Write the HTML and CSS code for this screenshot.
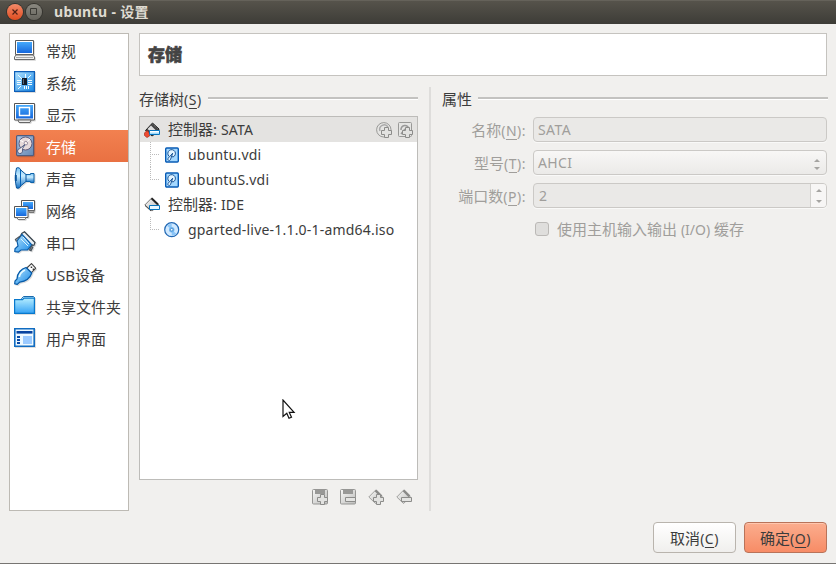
FILE: index.html
```
<!DOCTYPE html>
<html lang="zh-CN">
<head>
<meta charset="utf-8">
<title>ubuntu - 设置</title>
<link rel="stylesheet" href="styles.css">
</head>
<body>
<svg class="defs" width="0" height="0" aria-hidden="true">
  <defs>
    <linearGradient id="blue" x1="0" y1="0" x2="0" y2="1"><stop offset="0" stop-color="#45a9fb"/><stop offset="1" stop-color="#1667dc"/></linearGradient>
    <linearGradient id="sky" x1="0" y1="0" x2="1" y2="1"><stop offset="0" stop-color="#b5e4ff"/><stop offset="1" stop-color="#1688e6"/></linearGradient>
    <linearGradient id="horn" x1="0" y1="0" x2="0" y2="1"><stop offset="0" stop-color="#7cc4f4"/><stop offset=".4" stop-color="#c9ecff"/><stop offset="1" stop-color="#1270c4"/></linearGradient>
    <linearGradient id="folder" x1="0" y1="0" x2="0" y2="1"><stop offset="0" stop-color="#b5edff"/><stop offset="1" stop-color="#36a3f5"/></linearGradient>
    <linearGradient id="steel" x1="0" y1="0" x2="1" y2="1"><stop offset="0" stop-color="#a9c4e4"/><stop offset="1" stop-color="#6688b4"/></linearGradient>
    <linearGradient id="grey" x1="0" y1="0" x2="1" y2="1"><stop offset="0" stop-color="#f7f7f6"/><stop offset="1" stop-color="#bdbdbb"/></linearGradient>
    <symbol id="disk" viewBox="0 0 16 16">
      <rect x="1.7" y="1" width="12.6" height="14" rx="1" fill="#a4d8ff" stroke="#075bb5" stroke-width="1.4"/>
      <path d="M5 9.2A3.8 3.8 0 1 1 9 10L7.8 9.4M8.7 6.2 4.6 10.8a1.4 1.4 0 1 0 2 1.5z" fill="#e3f4ff" stroke="#1c5596" stroke-width="1"/>
    </symbol>
    <symbol id="plus" viewBox="0 0 11 11">
      <path d="M3.5.5h4v3h3v4h-3v3h-4v-3h-3v-4h3z" fill="#e2e2e0" stroke="#8c8c8a"/>
    </symbol>
  </defs>
</svg>
<div class="window">
  <header class="titlebar">
    <span class="win-btn close"><svg width="16" height="16" viewBox="0 0 16 16"><path d="m5.5 5.5 5 5m0-5-5 5" stroke="#512015" stroke-width="1.2"/></svg></span>
    <span class="win-btn max"><svg width="16" height="16" viewBox="0 0 16 16"><path d="M4.5 4.5h6v6h-6z" fill="none" stroke="#3b3a35" stroke-width="1"/></svg></span>
    <h1>ubuntu - 设置</h1>
  </header>
  <div class="content">
    <nav class="sidebar">
      <div class="item"><svg viewBox="0 0 22 22"><path d="M1.5 1.5h18v14h-18z" fill="#fff" stroke="#5a5a5a"/><path d="M3 3h15v11H3z" fill="url(#blue)"/><path d="M2 16h17l1.5 2v2.5H.5V18z" fill="#f0f0ef" stroke="#6c6c6c"/><path d="M2 18.5h17" stroke="#aaa"/></svg><span>常规</span></div>
      <div class="item"><svg viewBox="0 0 22 22"><path d="M.6.6h19.8v19.8H.6z" fill="url(#sky)" stroke="#0d5eb8" stroke-width="1.2"/><path d="M11.5 3v4M4 4l4 4m9-4-3 3M3 9.5h4m-4 2h4m-4 2h4m7-4h4m-4 2h4m-4 2h4M4 18l3-3m3.5 0v3m2-3v3m2-3v3" stroke="#f2fbff"/><path d="M8 7h5v7H8z" fill="#111b29"/><path d="M9 8h1v5H9z" fill="#596776"/></svg><span>系统</span></div>
      <div class="item"><svg viewBox="0 0 22 22"><path d="M.5.5h20v16.5h-20z" fill="#fff" stroke="#555"/><path d="M2 2h17v13.5H2z" fill="url(#blue)"/><path d="M5.5 4.5h10v8h-10z" fill="none" stroke="#fff" stroke-width="1.4"/><path d="m4 17 1 2.5h11l1-2.5z" fill="#eee" stroke="#666"/></svg><span>显示</span></div>
      <div class="item selected"><svg viewBox="0 0 22 22"><rect x="2.6" y=".6" width="17" height="20" rx="1" fill="url(#steel)" stroke="#505d80" stroke-width="1.2"/><circle cx="11.5" cy="8.5" r="6.5" fill="#e6d9da" stroke="#625c7a"/><path d="M11.5 8.5 16 3.7M11.5 8.5 6 5" stroke="#fff"/><circle cx="11.8" cy="8.2" r="1.8" fill="#faf1ec" stroke="#998c9f"/><path d="M11 9.5 5.6 13.6a2.5 2.5 0 1 0 2.8 3.3l.2-3.4z" fill="#eee5e7" stroke="#505d83"/></svg><span>存储</span></div>
      <div class="item"><svg viewBox="0 0 22 22"><path d="M11.5 7.5h5v-1H20v9h-3.5v-1h-5z" fill="url(#horn)" stroke="#0c62a9"/><path d="M2.5 1C4.5.2 6 1 6.8 3L12 7.5v7L6.8 18.8C6 21 4.5 21.6 2.5 21 1 15 1 7 2.5 1z" fill="url(#horn)" stroke="#07539b"/><path d="M6.5 3v16" fill="none" stroke="#0865b9"/><path d="M1.8 8v6" stroke="#07539b" stroke-width="2"/></svg><span>声音</span></div>
      <div class="item"><svg viewBox="0 0 22 22"><path d="M7.5 1.5h13v10h-13z" fill="#fff" stroke="#555"/><path d="M9 3h10v7H9z" fill="url(#blue)"/><path d="M15 12h5v1.5h-5z" fill="#ddd" stroke="#777"/><path d="M.5 7.5H14v11H.5z" fill="#fff" stroke="#555"/><path d="M2 9h10.5v8H2z" fill="url(#blue)"/><path d="M3 18.5h9l-1 2H4z" fill="#fff" stroke="#777"/></svg><span>网络</span></div>
      <div class="item"><svg viewBox="0 0 22 22"><path d="M8 2.2 10.5.8 21 11.5l-1 2.7-3 .1L7 4z" fill="#e9eff3" stroke="#36424b" stroke-width="1.2"/><path d="M8 3.5 18 14l-4.5 5H7L4.3 21.2.8 20.5 1 17.8 4 15l-1-5z" fill="url(#sky)" stroke="#075ba9" stroke-width="1.2"/><path d="m7 4.5-5.5 4 1 2m16 3-3 5.5 1.5.6 2-4" fill="none" stroke="#4b565f" stroke-width="1.3"/><path d="m7 8 7 7m-5-9 6 7" stroke="#ddf5ff"/></svg><span>串口</span></div>
      <div class="item"><svg viewBox="0 0 22 22"><path d="m12.8 5 4.7-4.4 4.2 4.6-4.5 4.6z" fill="#fff" stroke="#444" stroke-width="1.1"/><path d="M16.7 3.5h1.5v1.4h-1.5zm2 2h1.4v1.4h-1.4z" fill="#333"/><path d="M12 4.5 17.8 10c-1.6 4.8-6 8.3-12 9.1L3.2 21.4.7 20.8 1 18l2-2C3 10 7.5 5.8 12 4.5z" fill="url(#sky)" stroke="#075ba9" stroke-width="1.2"/><path d="M11 7c-3 1.5-5.3 4-5.7 7" fill="none" stroke="#e8faff" stroke-width="1.6"/></svg><span>USB设备</span></div>
      <div class="item"><svg viewBox="0 0 22 22"><path d="M7.5 5V3.7l2-2.2h10l1 1.2V6" fill="#c7eeff" stroke="#1a69ab"/><path d="M.6 4.6h8L10 3.2h10.4v15.2H.6z" fill="url(#folder)" stroke="#0878cc" stroke-width="1.2"/></svg><span>共享文件夹</span></div>
      <div class="item"><svg viewBox="0 0 22 22"><path d="M.8 1.8h19.4v17.5H.8z" fill="#eef9ff" stroke="#116cc1" stroke-width="1.6"/><path d="M2.5 4h16v2.6h-16z" fill="#0743a0"/><path d="M3 9h3v2H3zm0 3h3v2H3zm0 3h3v2H3z" fill="#0b4ba6"/><path d="M9 9h9v8H9z" fill="#9bcaff"/></svg><span>用户界面</span></div>
    </nav>
    <main class="main">
      <h2 class="page-title">存储</h2>
      <div class="panes">
        <section class="tree-pane">
          <h3 class="group-title"><span>存储树<i>(<u>S</u>)</i></span></h3>
          <div class="tree">
            <div class="row controller current">
              <svg class="ico" viewBox="0 0 16 16"><path d="M1.5 8.5 8.5 1 15 7l-1 3-6 4z" fill="#444" stroke="#222"/><path d="M3.5 7 7 3.5l5 5-4 2.5z" fill="#ddd"/><path d="m8.5 2 5 4.5" stroke="#888" stroke-dasharray="1 1"/><path d="M.5 11 3 8.5 5.5 11v3L3 15.5l-2.5-2z" fill="#ee4c32" stroke="#a82d1e" stroke-width=".7"/><path d="M5.5 8.5h10v4h-10z" fill="#fff" stroke="#0874bd"/><path d="M6 10.5h9V12H6z" fill="#9edcff"/></svg>
              <span class="label">控制器: <i>SATA</i></span>
              <svg class="ico add" viewBox="0 0 16 16"><circle cx="7.8" cy="7.8" r="7.2" fill="#e5e5e3" stroke="#999997"/><path d="M4 9a4.5 4.5 0 0 1 8-4" fill="none" stroke="#aaa" stroke-width="1.5"/><use href="#plus" x="5" y="5" width="11" height="11"/></svg>
              <svg class="ico add" viewBox="0 0 16 16"><rect x="1.5" y=".5" width="13" height="14" rx="1" fill="#e5e5e3" stroke="#999997"/><path d="M4 8a4 4 0 1 1 8-1M4 12l4-5" fill="none" stroke="#999" stroke-width="1.5"/><use href="#plus" x="5" y="5" width="11" height="11"/></svg>
            </div>
            <div class="row leaf"><span class="branch"></span><svg class="ico"><use href="#disk"/></svg><span class="label"><i>ubuntu.vdi</i></span></div>
            <div class="row leaf last"><span class="branch"></span><svg class="ico"><use href="#disk"/></svg><span class="label"><i>ubuntuS.vdi</i></span></div>
            <div class="row controller">
              <svg class="ico" viewBox="0 0 16 16"><path d="M.8 8 7.5 1.2 15 8l-7 6z" fill="url(#grey)" stroke="#777"/><path d="m7.5 1.2 6.5 6.3" stroke="#222" stroke-width="2"/><path d="M1 8.5 7 14" stroke="#444"/><path d="M5.5 8.5h10v4h-10z" fill="#e9f8ff" stroke="#0874bd"/></svg>
              <span class="label">控制器: <i>IDE</i></span>
            </div>
            <div class="row leaf last"><span class="branch"></span><svg class="ico" viewBox="0 0 16 16"><circle cx="7.7" cy="7.7" r="7" fill="#d0e9ff" stroke="#2168b4" stroke-width="1.2"/><path d="M7.7 7.7 3 3.7A6 6 0 0 1 7.7 2zM7.7 7.7l4.7 4a6 6 0 0 1-4.7 1.7z" fill="#8cc6f8"/><circle cx="7.7" cy="7.7" r="2.7" fill="#75b6ee"/><circle cx="7.7" cy="7.7" r="1.3" fill="#fff" stroke="#247ac5" stroke-width=".7"/></svg><span class="label"><i>gparted-live-1.1.0-1-amd64.iso</i></span></div>
            <svg class="pointer" width="14" height="21" viewBox="0 0 14 21"><path d="M1 1v16.5l3.8-3.3 2.2 5 2.5-1-2.2-4.8h4.8z" fill="#fff" stroke="#111" stroke-width="1.2"/></svg>
          </div>
          <div class="tools">
            <svg class="ico" viewBox="0 0 16 16"><rect x=".5" y=".5" width="15" height="14.5" rx="1" fill="url(#grey)" stroke="#969694"/><path d="M3 1h10v4H3z" fill="#989896"/><use href="#plus" x="5" y="5" width="11" height="11"/></svg>
            <svg class="ico" viewBox="0 0 16 16"><rect x=".5" y=".5" width="15" height="14.5" rx="1" fill="url(#grey)" stroke="#969694"/><path d="M3 1h10v4H3z" fill="#989896"/><path d="M5.5 8.5h10v4h-10z" fill="#e4e4e2" stroke="#8c8c8a"/></svg>
            <svg class="ico" viewBox="0 0 16 16"><path d="M.8 8 7.5 1.2 14.5 8l-7 6.5z" fill="url(#grey)" stroke="#a1a19f"/><path d="m7.5 1.4 6 6" stroke="#8a8a88" stroke-width="2.4"/><use href="#plus" x="5" y="5" width="11" height="11"/></svg>
            <svg class="ico" viewBox="0 0 16 16"><path d="M.8 8 7.5 1.2 14.5 8l-7 6.5z" fill="url(#grey)" stroke="#a1a19f"/><path d="m7.5 1.4 6 6" stroke="#8a8a88" stroke-width="2.4"/><path d="M5.5 8.5h10v4h-10z" fill="#e4e4e2" stroke="#8c8c8a"/></svg>
          </div>
        </section>
        <div class="splitter"></div>
        <section class="props-pane">
          <h3 class="group-title"><span>属性</span></h3>
          <div class="form">
            <label>名称<i>(<u>N</u>):</i></label><div class="field text"><i>SATA</i></div>
            <label>型号<i>(<u>T</u>):</i></label><div class="field combo"><i>AHCI</i><span class="arrows"></span></div>
            <label>端口数<i>(<u>P</u>):</i></label><div class="field spin"><i>2</i><span class="arrows"></span></div>
          </div>
          <div class="check"><span class="box"></span><span>使用主机输入输出 <i class="io">(I/O)</i> 缓存</span></div>
        </section>
      </div>
    </main>
  </div>
  <footer class="actions">
    <button class="btn">取消<i>(<u>C</u>)</i></button>
    <button class="btn primary">确定<i>(<u>O</u>)</i></button>
  </footer>
</div>
</body>
</html>
```
FILE: styles.css
```
* { box-sizing: border-box; }
body {
  margin: 0;
  background: #f1f0ee;
  color: #3c3c3c;
  font: 15px/20px "Noto Sans", "Noto Sans CJK SC", sans-serif;
  overflow: hidden;
}
i { font-style: normal; font-size: 14px; letter-spacing: .2px; }
i.io { letter-spacing: 0; }
u { text-decoration: underline; text-decoration-thickness: 1px; text-underline-offset: 3px; text-decoration-skip-ink: none; }
svg { display: block; flex: none; }
h1, h2, h3 { margin: 0; font-weight: normal; }
.defs { position: absolute; }
.window { width: 836px; height: 564px; display: flex; flex-direction: column; border-bottom: 1px solid #777572; }
.titlebar {
  height: 24px; flex: none; display: flex; align-items: center; padding: 0 0 2px 7px;
  background: linear-gradient(#56534b, #3d3c37); border-top: 1px solid #65625a;
}
.titlebar h1 { margin-left: 12px; color: #dfdbd2; font-size: 14px; font-weight: bold; line-height: 20px; letter-spacing: .35px; }
.win-btn { width: 16px; height: 16px; border-radius: 50%; box-shadow: 0 0 0 1px #35342f; margin-right: 3px; }
.win-btn.close { background: linear-gradient(#f48a69, #df4c20); }
.win-btn.max { background: linear-gradient(#8a8880, #66645d); margin-right: 0; }
.content { height: 487px; flex: none; display: flex; gap: 10px; padding: 9px 9px 0; }
.sidebar { width: 120px; flex: none; background: #fff; border: 1px solid #bdbab4; }
.item { height: 32px; display: flex; align-items: center; gap: 10px; padding-left: 4px; white-space: nowrap; }
.item svg { width: 22px; height: 22px; filter: drop-shadow(1px 1px 0 #0002); }
.item span { margin-top: 1px; }
.item.selected { color: #fff; background: linear-gradient(#f28150, #e97142); }
.main { flex: 1; min-width: 0; display: flex; flex-direction: column; }
.page-title { height: 43px; flex: none; border: 1px solid #c5c3bf; background: #fff; padding: 11px 8px; font-size: 17px; font-weight: 900; line-height: 20px; color: #444; -webkit-text-stroke: .6px #444; }
.panes { flex: 1; display: flex; padding-top: 11px; }
.tree-pane { width: 279px; flex: none; }
.group-title { height: 29px; display: flex; gap: 6px; font-size: 15px; line-height: 24px; white-space: nowrap; }
.group-title::after { content: ""; flex: 1; height: 2px; margin-top: 10px; background: #c3c2c0; border-bottom: 1px solid #fff; }
.tree-pane .group-title i { letter-spacing: .5px; }
.tree { position: relative; height: 364px; border: 1px solid #bdbcb9; background: #fff; }
.row { height: 25px; display: flex; align-items: center; white-space: nowrap; }
.row.current { background: #e4e3e1; }
.controller { padding: 0 4px; }
.controller .label { margin-left: 8px; flex: 1; }
.leaf .label { margin-left: 8px; }
.ico { width: 16px; height: 16px; }
.add { margin-left: 5px; }
.branch { width: 10px; height: 25px; margin: 0 4px 0 10px; background: linear-gradient(90deg, #bbb 50%, transparent 0) 0 12px / 2px 1px repeat-x, linear-gradient(#bbb 50%, transparent 0) 0 0 / 1px 2px repeat-y; }
.last .branch { height: 13px; align-self: flex-start; }
.pointer { position: absolute; left: 142px; top: 282px; }
.tools { display: flex; justify-content: flex-end; gap: 12px; padding: 9px 6px 0 0; }
.splitter { width: 2px; margin: 0 11px; background: #dedddb; }
.props-pane { flex: 1; margin-right: -1px; }
.form { display: grid; grid-template-columns: 84px 294px; grid-auto-rows: 25px; gap: 8px 7px; color: #a09e9b; margin-top: 1px; }
.form label { text-align: right; line-height: 26px; white-space: nowrap; }
.form label i { letter-spacing: .5px; }
.field { display: flex; align-items: center; border: 1px solid #cbc9c6; border-radius: 4px; background: #eae9e7; padding-left: 4px; box-shadow: 0 1px 0 #f9f9f8; }
.field i { flex: 1; letter-spacing: .4px; }
.combo { background: linear-gradient(#f8f7f6, #ebeae8); }
.spin { padding-left: 5px; }
.arrows { width: 16px; height: 23px; display: flex; flex-direction: column; align-items: center; justify-content: center; gap: 5px; }
.arrows::before, .arrows::after { content: ""; border: 3px solid transparent; border-top: 0; border-bottom: 3px solid #a5a4a1; }
.arrows::after { border-bottom: 0; border-top: 3px solid #a5a4a1; }
.combo .arrows { width: 18px; padding-top: 4px; }
.spin .arrows { gap: 8px; border-left: 1px solid #d1d0cd; background: #f7f6f5; border-radius: 0 3px 3px 0; }
.check { display: flex; align-items: center; margin: 11px 0 0 93px; color: #a09e9b; white-space: nowrap; }
.box { width: 14px; height: 14px; margin: -2px 8px 0 0; border: 1px solid #bbb9b6; border-radius: 3px; background: #dfdedc; }
.actions { display: flex; justify-content: flex-end; gap: 8px; padding: 11px 9px 0 0; }
.btn { width: 83px; height: 31px; padding: 2px 0 0; border: 1px solid #b9b4ad; border-radius: 4px; background: linear-gradient(#fff, #f0efed); color: #3c3c3c; font: inherit; }
.btn i { letter-spacing: .5px; }
.btn.primary { border-color: #b97359; background: linear-gradient(#fbad8e, #f78c66); box-shadow: inset 0 1px 0 #ffc6ae; }
```
